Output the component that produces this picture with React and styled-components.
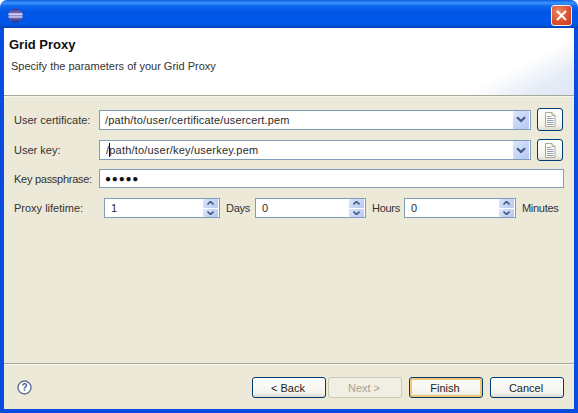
import React from "react";
import styled, { createGlobalStyle } from "styled-components";

const GlobalStyle = createGlobalStyle`
  html, body {
    margin: 0;
    padding: 0;
    background: #ffffff;
  }
  * {
    box-sizing: border-box;
  }
`;

const Chevron = () => (
  <svg width="10" height="7" viewBox="0 0 10 7">
    <path d="M1 1.2 L5 5 L9 1.2" fill="none" stroke="#445a80" strokeWidth="2.2" />
  </svg>
);

const DocIcon = () => (
  <svg width="12" height="15" viewBox="0 0 12 15">
    <path d="M1.5 .5 H8 L11 3.5 V14.5 H1.5 Z" fill="#fffef2" stroke="#a7a99a" />
    <path d="M8 .5 V3.5 H11" fill="#e8e6cf" stroke="#a7a99a" />
    <path d="M3 4.5 H7 M3 6.5 H9.5 M3 8.5 H9.5 M3 10.5 H9.5 M3 12.5 H9.5" stroke="#8d9bbd" />
  </svg>
);

const Window = styled.div`
  width: 578px;
  height: 413px;
  display: flex;
  flex-direction: column;
  overflow: hidden;
  border-radius: 7px 7px 0 0;
  font-family: "Liberation Sans", Arial, sans-serif;
  font-size: 11px;
  color: #2b2b2b;
`;

const TitleBar = styled.div`
  height: 28px;
  flex: none;
  display: flex;
  align-items: center;
  justify-content: space-between;
  padding: 2px 6px 0 8px;
  background: linear-gradient(
    180deg,
    #0a5be0 0,
    #3d95ff 3px,
    #0f66ee 6px,
    #0055e5 12px,
    #0058ea 22px,
    #0050d8 26px,
    #003dae 28px
  );
`;

const CloseButton = styled.div`
  width: 21px;
  height: 21px;
  display: flex;
  align-items: center;
  justify-content: center;
  border: 1px solid #f4f0ee;
  border-radius: 3px;
  background: radial-gradient(circle at 35% 30%, #ee8a68, #dd5130 55%, #c23c1c);
`;

const Frame = styled.div`
  flex: 1;
  min-height: 0;
  display: flex;
  flex-direction: column;
  background: #ece9d8;
  border-style: solid;
  border-color: #0a4be0;
  border-width: 0 4px 4px 4px;
`;

const Banner = styled.div`
  height: 68px;
  flex: none;
  padding: 9px 5px 0;
  background: linear-gradient(
    152deg,
    #ffffff 0,
    #ffffff 84%,
    #e6ecf7 93%,
    #dfe6f4 100%
  );
  border-bottom: 1px solid #a9a797;
  box-shadow: 0 1px 0 #f7f6ee;
`;

const Heading = styled.div`
  font-size: 13px;
  font-weight: 700;
  line-height: 15px;
  color: #101010;
`;

const Subtitle = styled.div`
  margin: 7px 0 0 2px;
  line-height: 14px;
  color: #333333;
`;

const Form = styled.div`
  flex: 1;
  min-height: 0;
  padding: 12px 10px 0;
  display: flex;
  flex-direction: column;
  gap: 8px;
`;

const Row = styled.div`
  display: flex;
  align-items: center;
  height: ${(p) => p.$height}px;
  margin-top: ${(p) => p.$top || 0}px;
`;

const Label = styled.div`
  width: 85px;
  flex: none;
  color: #333333;
  letter-spacing: ${(p) => (p.$tight ? "-0.27px" : "0")};
`;

const Box = styled.div`
  height: ${(p) => p.$height || 20}px;
  display: flex;
  align-items: center;
  background: #ffffff;
  border: 1px solid #7f9db9;
`;

const ComboBox = styled(Box)`
  flex: 1;
  padding: 0 1px 0 5px;
`;

const PasswordBox = styled(Box)`
  flex: 1;
  padding-left: 5px;
  font-size: 10px;
  letter-spacing: 0.8px;
  color: #111111;
`;

const Value = styled.div`
  flex: 1;
  position: relative;
  padding-left: ${(p) => p.$indent || 0}px;
  letter-spacing: ${(p) => p.$spacing || 0}px;
`;

const Caret = styled.span`
  position: absolute;
  left: 4px;
  top: -1px;
  width: 1px;
  height: 14px;
  background: #111111;
`;

const DropButton = styled.div`
  width: 16px;
  height: 18px;
  display: flex;
  align-items: center;
  justify-content: center;
  border-radius: 1px;
  background: linear-gradient(135deg, #dbe6fc, #b5c8f3);
`;

const IconButton = styled.div`
  width: 26px;
  height: ${(p) => p.$height}px;
  margin: 0 1px 0 6px;
  flex: none;
  display: flex;
  align-items: center;
  justify-content: center;
  border: 1px solid #003c74;
  border-radius: 3px;
  background: linear-gradient(180deg, #ffffff, #f3f2ea 80%, #dcd8ca);
`;

const Spinner = styled(Box)`
  width: ${(p) => p.$width}px;
  flex: none;
  padding: 0 1px 0 6px;
`;

const SpinButtons = styled.div`
  width: 15px;
  height: 18px;
  display: flex;
  flex-direction: column;
  gap: 1px;
`;

const SpinButton = styled.div`
  flex: 1;
  display: flex;
  align-items: center;
  justify-content: center;
  border-radius: 1px;
  background: linear-gradient(135deg, #dbe6fc, #b5c8f3);
`;

const Unit = styled.div`
  width: ${(p) => p.$width}px;
  flex: none;
  padding-left: 6px;
  color: #333333;
  letter-spacing: -0.3px;
`;

const SpinIndent = styled.div`
  width: 5px;
  flex: none;
`;

const Footer = styled.div`
  height: 46px;
  flex: none;
  padding: 13px 10px 0 13px;
  display: flex;
  align-items: flex-start;
  border-top: 1px solid #a9a797;
  box-shadow: inset 0 1px 0 #f7f6ee;
`;

const HelpIcon = styled.div`
  margin-top: 3px;
  margin-right: auto;
  height: 15px;
`;

const DialogButton = styled.div`
  width: 74px;
  height: 21px;
  margin-left: ${(p) => p.$gap || 2}px;
  padding-right: 2px;
  display: flex;
  align-items: center;
  justify-content: center;
  border-radius: 3px;
  border: 1px solid ${(p) => (p.$disabled ? "#cbc8b8" : "#003c74")};
  color: ${(p) => (p.$disabled ? "#a5a391" : "#222222")};
  background: ${(p) =>
    p.$disabled
      ? "#f1efe3"
      : "linear-gradient(180deg, #ffffff, #f4f3ec 80%, #dcd8ca)"};
  box-shadow: ${(p) =>
    p.$default ? "inset 0 0 0 2px #f2c56f" : "none"};
`;

const SpinField = ({ value, width }) => (
  <Spinner $width={width}>
    <Value>{value}</Value>
    <SpinButtons>
      <SpinButton>
        <svg width="7" height="4" viewBox="0 0 7 4">
          <path d="M.5 3.5 L3.5 .5 L6.5 3.5" fill="none" stroke="#445a80" strokeWidth="1.6" />
        </svg>
      </SpinButton>
      <SpinButton>
        <svg width="7" height="4" viewBox="0 0 7 4">
          <path d="M.5 .5 L3.5 3.5 L6.5 .5" fill="none" stroke="#445a80" strokeWidth="1.6" />
        </svg>
      </SpinButton>
    </SpinButtons>
  </Spinner>
);

export default function App() {
  return (
    <>
      <GlobalStyle />
      <Window>
        <TitleBar>
          <svg width="15" height="15" viewBox="0 0 15 15">
            <defs>
              <linearGradient id="sphere" x1="0" y1="0" x2="0" y2="1">
                <stop offset="0" stopColor="#3c3a92" />
                <stop offset="0.5" stopColor="#8f88cf" />
                <stop offset="1" stopColor="#2c2a78" />
              </linearGradient>
            </defs>
            <circle cx="7.5" cy="7.5" r="7" fill="url(#sphere)" />
            <path d="M.5 6.2 H14.5 M.5 9 H14.5" stroke="#f4f2ff" strokeWidth="1.2" />
          </svg>
          <CloseButton>
            <svg width="11" height="11" viewBox="0 0 11 11">
              <path d="M1 1 L10 10 M10 1 L1 10" stroke="#ffffff" strokeWidth="2" />
            </svg>
          </CloseButton>
        </TitleBar>
        <Frame>
          <Banner>
            <Heading>Grid Proxy</Heading>
            <Subtitle>Specify the parameters of your Grid Proxy</Subtitle>
          </Banner>
          <Form>
            <Row $height={23}>
              <Label>User certificate:</Label>
              <ComboBox>
                <Value $spacing={0.16}>/path/to/user/certificate/usercert.pem</Value>
                <DropButton><Chevron /></DropButton>
              </ComboBox>
              <IconButton $height={23}><DocIcon /></IconButton>
            </Row>
            <Row $height={22}>
              <Label>User key:</Label>
              <ComboBox>
                <Value $spacing={0.2} $indent={1}><Caret />/path/to/user/key/userkey.pem</Value>
                <DropButton><Chevron /></DropButton>
              </ComboBox>
              <IconButton $height={22}><DocIcon /></IconButton>
            </Row>
            <Row $height={19}>
              <Label $tight>Key passphrase:</Label>
              <PasswordBox $height={19}>●●●●●</PasswordBox>
            </Row>
            <Row $height={20} $top={2}>
              <Label>Proxy lifetime:</Label>
              <SpinIndent />
              <SpinField value="1" width={116} />
              <Unit $width={35}>Days</Unit>
              <SpinField value="0" width={111} />
              <Unit $width={38}>Hours</Unit>
              <SpinField value="0" width={112} />
              <Unit $width={48}>Minutes</Unit>
            </Row>
          </Form>
          <Footer>
            <HelpIcon>
              <svg width="15" height="15" viewBox="0 0 15 15">
                <circle cx="7.5" cy="7.5" r="6.5" fill="#ffffff" stroke="#5d7391" strokeWidth="1.4" />
                <text x="7.5" y="11" textAnchor="middle" fontSize="10" fontWeight="700" fontFamily="Liberation Sans" fill="#4a5f80">?</text>
              </svg>
            </HelpIcon>
            <DialogButton>&lt; Back</DialogButton>
            <DialogButton $disabled>Next &gt;</DialogButton>
            <DialogButton $default $gap={7}>Finish</DialogButton>
            <DialogButton $gap={7}>Cancel</DialogButton>
          </Footer>
        </Frame>
      </Window>
    </>
  );
}
